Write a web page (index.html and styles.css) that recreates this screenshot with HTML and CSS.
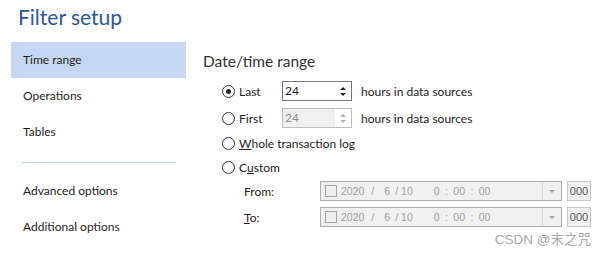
FILE: index.html
```html
<!DOCTYPE html>
<html lang="en">
<head>
  <meta charset="UTF-8">
  <title>Filter setup</title>
  <link rel="stylesheet" href="styles.css">
</head>
<body>
  <div class="page">
    <h1 class="title">Filter setup</h1>

    <div class="main">
      <aside class="sidebar">
        <div class="side-item active">Time range</div>
        <div class="side-item">Operations</div>
        <div class="side-item">Tables</div>
        <div class="side-sep"></div>
        <div class="side-item">Advanced options</div>
        <div class="side-item">Additional options</div>
      </aside>

      <section class="panel">
        <h2 class="panel-title">Date/time range</h2>

        <div class="row row-last">
          <label class="radio-label"><span class="radio checked"></span>Last</label>
          <div class="spin">
            <span class="spin-value">24</span>
            <span class="spin-btns"><span class="up"></span><span class="down"></span></span>
          </div>
          <span class="hint">hours in data sources</span>
        </div>

        <div class="row row-first">
          <label class="radio-label"><span class="radio"></span>First</label>
          <div class="spin disabled">
            <span class="spin-value">24</span>
            <span class="spin-btns"><span class="up"></span><span class="down"></span></span>
          </div>
          <span class="hint">hours in data sources</span>
        </div>

        <div class="row row-whole">
          <label class="radio-label wide"><span class="radio"></span><u>W</u>hole transaction log</label>
        </div>

        <div class="row row-custom">
          <label class="radio-label wide"><span class="radio"></span>C<u>u</u>stom</label>
        </div>

        <div class="row date-row row-from">
          <span class="date-label">From:</span>
          <div class="picker">
            <span class="check"></span>
            <span class="d-year">2020</span><span class="d-sep">/</span><span class="d-month">6</span><span class="d-sep2">/</span><span class="d-day">10</span>
            <span class="d-time">0 : 00 : 00</span>
            <span class="drop"><span class="arrow"></span></span>
          </div>
          <span class="ms">000</span>
        </div>

        <div class="row date-row row-to">
          <span class="date-label"><u>T</u>o:</span>
          <div class="picker">
            <span class="check"></span>
            <span class="d-year">2020</span><span class="d-sep">/</span><span class="d-month">6</span><span class="d-sep2">/</span><span class="d-day">10</span>
            <span class="d-time">0 : 00 : 00</span>
            <span class="drop"><span class="arrow"></span></span>
          </div>
          <span class="ms">000</span>
        </div>
      </section>
    </div>

    <div class="watermark">CSDN @末之咒</div>
  </div>
</body>
</html>
```

FILE: styles.css
```css
body {
  margin: 0;
  background: #fff;
  font-family: Lato, 'Open Sans', sans-serif;
  font-size: 12px;
  color: #1e1e1e;
}
.page {
  position: relative;
  width: 606px;
  height: 256px;
  overflow: hidden;
}
.title {
  margin: 0;
  padding: 2px 0 0 18px;
  height: 40px;
  box-sizing: border-box;
  font-size: 21px;
  font-weight: 400;
  line-height: 30px;
  color: #2b579a;
}
.main {
  display: flex;
}
.sidebar {
  width: 175px;
  margin-left: 11px;
  padding-top: 2px;
}
.side-item {
  height: 36px;
  line-height: 36px;
  padding-left: 12px;
}
.side-item.active {
  background: #c5d7f2;
}
.side-sep {
  height: 1px;
  margin: 12px 10px 10px;
  background: #c5d6f0;
}
.panel {
  margin-left: 17px;
  flex: 1;
}
.panel-title {
  margin: 0;
  padding-top: 10px;
  height: 31px;
  font-size: 15.5px;
  font-weight: 400;
  line-height: 22px;
  color: #333;
}
.row {
  display: flex;
  align-items: center;
  padding-left: 19px;
  height: 20px;
}
.row-first { margin-top: 7px; }
.row-whole { margin-top: 5px; }
.row-custom { margin-top: 4px; }
.radio-label {
  display: flex;
  align-items: center;
  width: 60px;
}
.radio-label.wide {
  width: auto;
}
.radio {
  width: 11px;
  height: 11px;
  border: 1px solid #333;
  border-radius: 50%;
  margin-right: 4px;
  position: relative;
}
.radio.checked::after {
  content: '';
  position: absolute;
  left: 3px;
  top: 3px;
  width: 5px;
  height: 5px;
  border-radius: 50%;
  background: #222;
}
.spin {
  display: flex;
  width: 70px;
  height: 20px;
  box-sizing: border-box;
  border: 1px solid #7a7a7a;
  background: #fff;
}
.spin-value {
  flex: 1;
  padding-left: 2px;
  line-height: 18px;
}
.spin-btns {
  width: 16px;
  display: flex;
  flex-direction: column;
  align-items: center;
  justify-content: center;
  gap: 3px;
}
.spin-btns .up,
.spin-btns .down {
  width: 0;
  height: 0;
  border-left: 3px solid transparent;
  border-right: 3px solid transparent;
}
.spin-btns .up { border-bottom: 3px solid #222; }
.spin-btns .down { border-top: 3px solid #222; }
.spin.disabled {
  border-color: #bdbdbd;
}
.spin.disabled .spin-value {
  background: #f0f0f0;
  color: #8c8c8c;
}
.spin.disabled .up { border-bottom-color: #b0b0b0; }
.spin.disabled .down { border-top-color: #b0b0b0; }
.hint {
  margin-left: 9px;
}
.date-row {
  padding-left: 41px;
}
.row-from { margin-top: 4px; }
.row-to { margin-top: 6px; }
.date-label {
  width: 76px;
}
.picker {
  display: flex;
  align-items: center;
  width: 242px;
  height: 20px;
  box-sizing: border-box;
  border: 1px solid #adadad;
  background: #f0f0f0;
  color: #a0a0a0;
  font-family: 'Liberation Sans', sans-serif;
  font-size: 10.5px;
}
.check {
  width: 10px;
  height: 10px;
  border: 1px solid #a6a6a6;
  margin: 0 4px 0 4px;
}
.d-sep { margin: 0 10px 0 7px; }
.d-sep2 { margin: 0 3px 0 5px; }
.d-time { margin-left: 21px; word-spacing: 2.5px; }
.drop {
  margin-left: auto;
  width: 18px;
  height: 18px;
  border-left: 1px solid #d4d4d4;
  display: flex;
  align-items: center;
  justify-content: center;
}
.arrow {
  width: 0;
  height: 0;
  border-left: 3px solid transparent;
  border-right: 3px solid transparent;
  border-top: 3px solid #a8a8a8;
}
.ms {
  margin-left: 5px;
  width: 24px;
  height: 20px;
  box-sizing: border-box;
  border: 1px solid #c8c8c8;
  background: #f0f0f0;
  color: #5a5a5a;
  text-align: center;
  line-height: 18px;
  font-family: 'Liberation Sans', sans-serif;
  font-size: 11px;
}
.watermark {
  position: absolute;
  right: 15px;
  bottom: 8px;
  font-family: 'Liberation Sans', 'Noto Sans CJK SC', sans-serif;
  font-size: 13.5px;
  color: #a8a8a8;
}
```
